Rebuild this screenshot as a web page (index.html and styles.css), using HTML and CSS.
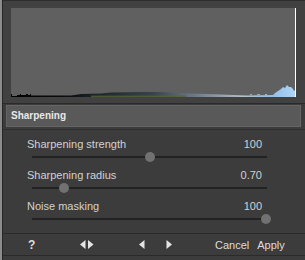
FILE: index.html
```html
<!DOCTYPE html>
<html>
<head>
<meta charset="utf-8">
<link rel="stylesheet" href="styles.css">
</head>
<body>
<div class="app">
  <div class="inner">
    <div class="top">
      <div class="hist">
        <svg width="285" height="89" viewBox="0 0 285 89">
          <defs>
            <linearGradient id="hg" x1="0" y1="0" x2="1" y2="0">
              <stop offset="0" stop-color="#000"/>
              <stop offset="0.2" stop-color="#0b0d10"/>
              <stop offset="0.3" stop-color="#1e252c"/>
              <stop offset="0.5" stop-color="#37434f"/>
              <stop offset="0.65" stop-color="#6d7b88"/>
              <stop offset="0.82" stop-color="#b4c0cb"/>
              <stop offset="0.92" stop-color="#93bde8"/>
              <stop offset="1" stop-color="#b0d4f6"/>
            </linearGradient>
          </defs>
          <path d="M0,89 L0,86 L1,86 L1,88 L6,88 L6,87 L9,87 L9,86 L10,86 L10,87 L15,87 L15,86 L17,86 L17,87 L19,87 L19,86 L20,86 L20,87.5 L60,87.5 L70,86 L90,85.5 L100,84.5 L130,84 L150,84 L160,84.5 L180,85.5 L210,86.5 L235,87.5 L262,87 L264,85 L267,83 L270,81 L272,79 L274,80 L276,77 L278,79 L280,79 L282,81 L283,83 L284,82 L284,89 Z" fill="url(#hg)"/>
          <rect x="80" y="87.6" width="95" height="1.4" fill="#55642e" opacity="0.8"/>
          <rect x="239" y="86" width="2" height="1" fill="#9aa6b2"/>
          <rect x="246" y="86" width="3" height="1" fill="#9aa6b2"/>
          <rect x="254" y="86" width="2" height="1" fill="#aab6c2"/>
          <rect x="284" y="0" width="1.5" height="89" fill="#ffffff"/>
        </svg>
      </div>
    </div>
    <div class="section">
      <div class="header">Sharpening</div>
    </div>
    <div class="rows">
      <div class="row">
        <div class="label-line"><span>Sharpening strength</span><span>100</span></div>
        <div class="slider"><div class="track"></div><div class="thumb" style="left: 113px"></div></div>
      </div>
      <div class="row">
        <div class="label-line"><span>Sharpening radius</span><span>0.70</span></div>
        <div class="slider"><div class="track"></div><div class="thumb" style="left: 27px"></div></div>
      </div>
      <div class="row">
        <div class="label-line"><span>Noise masking</span><span>100</span></div>
        <div class="slider"><div class="track"></div><div class="thumb" style="left: 229px"></div></div>
      </div>
    </div>
    <div class="bottom">
      <span class="help">?</span>
      <svg class="swap" width="14" height="9" viewBox="0 0 14 9"><polygon points="5.5,0 5.5,9 0,4.5" fill="#e4e4e4"/><polygon points="8,0 8,9 13.5,4.5" fill="#e4e4e4"/></svg>
      <svg class="prev" width="6" height="9" viewBox="0 0 6 9"><polygon points="5.5,0 5.5,9 0,4.5" fill="#e4e4e4"/></svg>
      <svg class="next" width="6" height="9" viewBox="0 0 6 9"><polygon points="0.5,0 0.5,9 6,4.5" fill="#e4e4e4"/></svg>
      <span class="cancel">Cancel</span>
      <span class="apply">Apply</span>
    </div>
  </div>
</div>
</body>
</html>
```
FILE: styles.css
```css
html, body {
  margin: 0;
  padding: 0;
}
body {
  width: 305px;
  height: 260px;
  overflow: hidden;
  background: #3c3c3c;
  font-family: "Liberation Sans", Arial, sans-serif;
  color: #d2d2d2;
}
.app {
  height: 260px;
  border-left: 2px solid #8c8c8c;
  display: flex;
}
.inner {
  flex: 1;
  border-left: 1px solid #262626;
  display: flex;
  flex-direction: column;
}
.top {
  background: #414141;
  border-top: 1px solid #2e2e2e;
  border-bottom: 1px solid #2a2a2a;
  padding: 7px 0 6px 8px;
}
.hist {
  width: 285px;
  height: 89px;
  background: #606060;
}
.hist svg {
  display: block;
}
.section {
  padding: 1px 4px 0 3px;
}
.header {
  height: 20px;
  border: 1px solid #656565;
  background: #595959;
  color: #e8e8e8;
  font-weight: bold;
  font-size: 10px;
  line-height: 20px;
  padding-left: 4px;
}
.rows {
  margin-top: 2px;
  border-top: 1px solid #2f2f2f;
  padding-top: 7px;
  padding-left: 24px;
  padding-right: 43px;
}
.label-line {
  display: flex;
  justify-content: space-between;
  font-size: 11px;
  line-height: 14px;
  height: 14px;
}
.slider {
  position: relative;
  height: 12px;
  padding-top: 5px;
  margin-left: 5px;
  margin-right: -5px;
}
.track {
  height: 2px;
  background: #222222;
}
.thumb {
  position: absolute;
  top: 1px;
  width: 10px;
  height: 10px;
  border-radius: 50%;
  background: #717171;
}
.bottom {
  margin-top: 3px;
  border-top: 1px solid #2a2a2a;
  border-bottom: 1px solid #2a2a2a;
  height: 21px;
  display: flex;
  align-items: center;
  padding-left: 25px;
  font-size: 11px;
  color: #dcdcdc;
}
.help {
  font-weight: bold;
  font-size: 12px;
  width: 7px;
}
.swap {
  margin-left: 45px;
}
.prev {
  margin-left: 45px;
}
.next {
  margin-left: 21px;
}
.cancel {
  margin-left: 43px;
}
.apply {
  margin-left: 8px;
}
```
